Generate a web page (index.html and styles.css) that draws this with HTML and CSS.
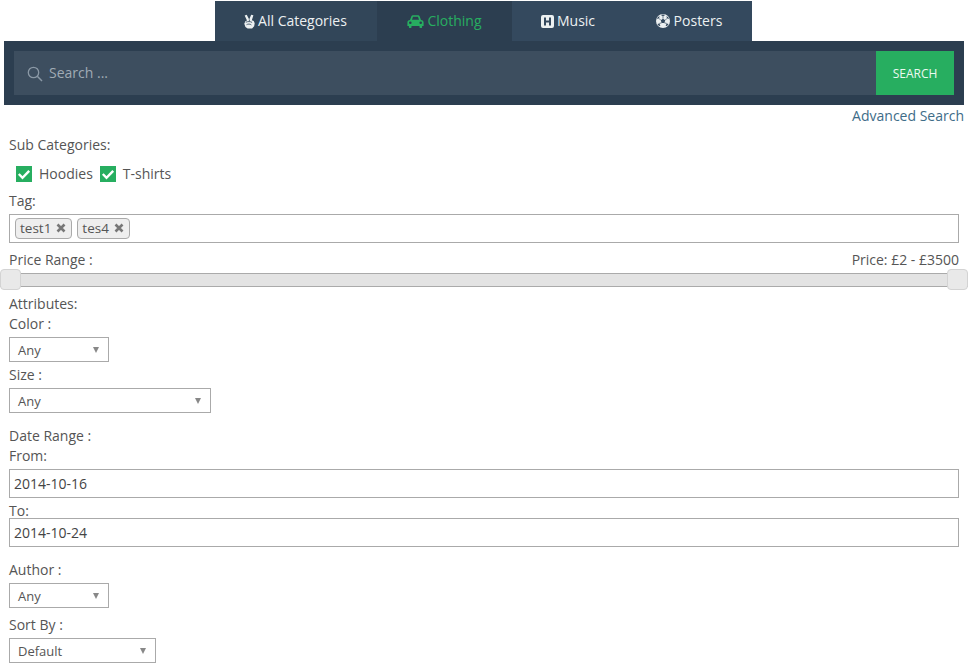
FILE: index.html
```html
<!DOCTYPE html>
<html lang="en">
<head>
<meta charset="utf-8">
<title>Search</title>
<link rel="stylesheet" href="styles.css">
</head>
<body>
<nav class="tabs">
  <a class="tab tab-all"><svg class="ico" viewBox="0 0 14 16"><path fill="#ecf0f1" d="M1.800 1.500 4 .6 6.700 5.800 8.800.6 11.200 1.300 9.500 6.600 11.600 7.400 12.600 10 12 13 9.800 15.600H5L2.600 13.800 1.400 10.500 2.500 7.800 4.300 6.800z"/><path fill="none" stroke="#34495e" stroke-width=".9" d="M3 8.800c2-1 5-1 6.800.2M3.800 11.500c1.500-1 3.800-1 5.200.2M6.700 5.800 7 7.800"/></svg>All Categories</a>
  <a class="tab tab-active tab-clothing"><svg class="ico ico-car" viewBox="0 0 17 13"><path fill="#27ae60" d="M3 5 4.300 1.400C4.600.6 5.200.2 6 .2h5c.8 0 1.400.4 1.700 1.200L14 5c1.600.2 2.600 1.100 2.600 2.500V11h-1.500v1.300c0 .4-.3.700-.7.700h-1.200c-.4 0-.7-.3-.7-.7V11H4.500v1.300c0 .4-.3.700-.7.700H2.600c-.4 0-.7-.3-.7-.7V11H.4V7.500C.4 6.100 1.400 5.200 3 5zM5 4.800h7l-1-3H6zM3.300 6.500a1.300 1.300 0 1 0 0 2.600 1.300 1.300 0 0 0 0-2.600zM13.700 6.500a1.300 1.300 0 1 0 0 2.600 1.300 1.300 0 0 0 0-2.600z" fill-rule="evenodd"/></svg>Clothing</a>
  <a class="tab tab-music"><svg class="ico ico-h" viewBox="0 0 13 13"><path fill="#ecf0f1" fill-rule="evenodd" d="M2 0h9a2 2 0 0 1 2 2v9a2 2 0 0 1-2 2H2a2 2 0 0 1-2-2V2a2 2 0 0 1 2-2zM3 2.500v8h2V7.500h3v3h2v-8H8v3H5v-3z"/></svg>Music</a>
  <a class="tab tab-posters"><svg class="ico ico-ball" viewBox="0 0 14 14"><circle cx="7" cy="7" r="7" fill="#ecf0f1"/><path fill="#34495e" d="M7 4.700 9.200 6.300 8.400 8.900H5.600L4.800 6.300zM4.800 1 7 2.200 9.200 1 7 .5zM.9 5 3 4.300 3.600 2 1.800 3.200zM13.100 5 11 4.300 10.400 2 12.200 3.200zM1.400 10 3.300 9.400 4.400 11.800 3 12zM12.600 10 10.700 9.400 9.600 11.800 11 12z"/><path fill="none" stroke="#34495e" stroke-width=".7" d="M7 2.200V4.700M4.800 6.300 3 4.300M9.200 6.300 11 4.300M5.600 8.900 3.300 9.400M8.400 8.900 10.700 9.400"/></svg>Posters</a>
</nav>

<form class="searchbar">
  <div class="search-field">
    <svg class="search-ico" viewBox="0 0 16 16"><circle cx="6.500" cy="6.500" r="5.200" fill="none" stroke="#8b99a6" stroke-width="1.300"/><path d="M10.300 10.300 15 15" stroke="#8b99a6" stroke-width="1.500" fill="none"/></svg>
    <span class="placeholder">Search ...</span>
  </div>
  <div class="search-btn">SEARCH</div>
</form>

<div class="adv"><a>Advanced Search</a></div>

<div class="filters">
  <div class="lbl lbl-sub">Sub Categories:</div>
  <div class="checks">
    <span class="check"><svg viewBox="0 0 16 16"><path d="M2.800 8 6.500 11.800 13.200 4.800" fill="none" stroke="#fff" stroke-width="2.400"/></svg></span><span class="check-text">Hoodies</span>
    <span class="check"><svg viewBox="0 0 16 16"><path d="M2.800 8 6.500 11.800 13.200 4.800" fill="none" stroke="#fff" stroke-width="2.400"/></svg></span><span class="check-text">T-shirts</span>
  </div>
  <div class="lbl lbl-tag">Tag:</div>
  <div class="tagbox">
    <span class="chip">test1<svg class="chip-x" viewBox="0 0 10 10"><path d="M1.500 1.500 8.500 8.500M8.500 1.500 1.500 8.500" stroke="#777" stroke-width="2.600" fill="none"/></svg></span>
    <span class="chip">tes4<svg class="chip-x" viewBox="0 0 10 10"><path d="M1.500 1.500 8.500 8.500M8.500 1.500 1.500 8.500" stroke="#777" stroke-width="2.600" fill="none"/></svg></span>
  </div>
  <div class="price-row"><span>Price Range :</span><span>Price: £2 - £3500</span></div>
  <div class="slider"><span class="handle handle-l"></span><span class="handle handle-r"></span></div>
  <div class="lbl lbl-attr">Attributes:</div>
  <div class="lbl lbl-color">Color :</div>
  <div class="select sel-100"><span>Any</span><i></i></div>
  <div class="lbl lbl-size">Size :</div>
  <div class="select sel-202"><span>Any</span><i></i></div>
  <div class="lbl lbl-date">Date Range :</div>
  <div class="lbl lbl-from">From:</div>
  <div class="textbox">2014-10-16</div>
  <div class="lbl lbl-to">To:</div>
  <div class="textbox">2014-10-24</div>
  <div class="lbl lbl-author">Author :</div>
  <div class="select sel-100"><span>Any</span><i></i></div>
  <div class="lbl lbl-sort">Sort By :</div>
  <div class="select sel-147"><span>Default</span><i></i></div>
</div>
</body>
</html>
```
FILE: styles.css
```css
* { box-sizing: border-box; }
html, body { margin: 0; padding: 0; }
body {
  background: #fff;
  color: #555;
  font-family: "Open Sans", "Liberation Sans", sans-serif;
  font-size: 14px;
  line-height: 20px;
  height: 672px;
  overflow: hidden;
}
.tabs {
  display: flex;
  width: 537px;
  height: 40px;
  margin: 1px 0 0 215px;
  background: #34495e;
}
.tab {
  display: flex;
  align-items: center;
  justify-content: center;
  height: 40px;
  color: #ecf0f1;
  white-space: nowrap;
}
.tab-all { width: 162px; padding-right: 2px; background: #324659; }
.tab-clothing { width: 135px; }
.tab-music { width: 114px; padding-right: 2px; }
.tab-posters { width: 126px; }
.tab-active { background: #2c3e50; color: #27ae60; }
.ico { width: 13px; height: 15px; margin-right: 2px; flex: none; }
.ico-car { width: 17px; height: 13px; margin-right: 3px; }
.ico-h { width: 13px; height: 13px; margin-right: 3px; }
.ico-ball { width: 14px; height: 14px; margin-right: 4px; }
.searchbar {
  display: flex;
  width: 960px;
  height: 64px;
  margin: 0 0 0 4px;
  padding: 10px;
  background: #2c3e50;
}
.search-field {
  flex: 1;
  display: flex;
  align-items: center;
  height: 44px;
  padding-left: 13px;
  background: #3d4e5f;
}
.search-ico { width: 16px; height: 16px; margin: 1px 6px 0 0; }
.placeholder { color: #a0abb5; }
.search-btn {
  width: 78px;
  height: 44px;
  background: #27ae60;
  color: #ecf9f1;
  font-size: 12px;
  line-height: 46px;
  text-align: center;
}
.adv {
  width: 964px;
  height: 20px;
  margin-top: 1px;
  text-align: right;
  color: #3e6c88;
}
.filters { width: 950px; margin: 0 0 0 9px; }
.lbl { height: 20px; }
.lbl-sub { margin-top: 9px; }
.checks {
  display: flex;
  align-items: center;
  height: 20px;
  margin: 9px 0 0 7px;
}
.check {
  width: 16px;
  height: 16px;
  background: #27ae60;
  margin-right: 7px;
  display: block;
}
.check svg { display: block; width: 16px; height: 16px; }
.check-text { margin-right: 7px; }
.lbl-tag { margin-top: 7px; }
.tagbox {
  display: flex;
  align-items: center;
  gap: 5px;
  height: 29px;
  margin-top: 3px;
  padding: 0 0 1px 5px;
  border: 1px solid #aaa;
}
.chip {
  display: flex;
  align-items: center;
  height: 21px;
  padding: 0 5px 0 4px;
  background: #eee;
  border: 1px solid #aaa;
  border-radius: 4px;
  font-size: 13.500px;
}
.chip-x { width: 10px; height: 10px; margin-left: 5px; }
.price-row {
  display: flex;
  justify-content: space-between;
  margin-top: 7px;
  height: 20px;
}
.slider {
  position: relative;
  height: 14px;
  margin: 3px 0 0 -9px;
  width: 968px;
  background: #e3e3e3;
  border: 1px solid #aaa;
  border-width: 1px 0;
}
.handle {
  position: absolute;
  top: -5px;
  width: 21px;
  height: 21px;
  background: #e9e9e9;
  border: 1px solid #d3d3d3;
  border-radius: 4px;
}
.handle-l { left: 0; }
.handle-r { right: 0; }
.lbl-attr { margin-top: 7px; }
.select {
  display: flex;
  align-items: center;
  justify-content: space-between;
  height: 25px;
  margin-top: 3px;
  padding: 0 9px 0 8px;
  background: #fff;
  border: 1px solid #aaa;
  font-size: 13px;
}
.select i {
  display: block;
  width: 0;
  height: 0;
  border-left: 3.500px solid transparent;
  border-right: 3.500px solid transparent;
  border-top: 6px solid #888;
}
.sel-100 { width: 100px; }
.sel-202 { width: 202px; }
.sel-147 { width: 147px; }
.lbl-size { margin-top: 3px; }
.lbl-date { margin-top: 13px; }
.textbox {
  height: 29px;
  border: 1px solid #aaa;
  padding-left: 4px;
  line-height: 27px;
  color: #444;
  margin-top: 3px;
}
.lbl-to { margin-top: 3px; }
.lbl-to + .textbox { margin-top: -3px; }
.lbl-author { margin-top: 13px; }
.lbl-sort { margin-top: 7px; }
```
